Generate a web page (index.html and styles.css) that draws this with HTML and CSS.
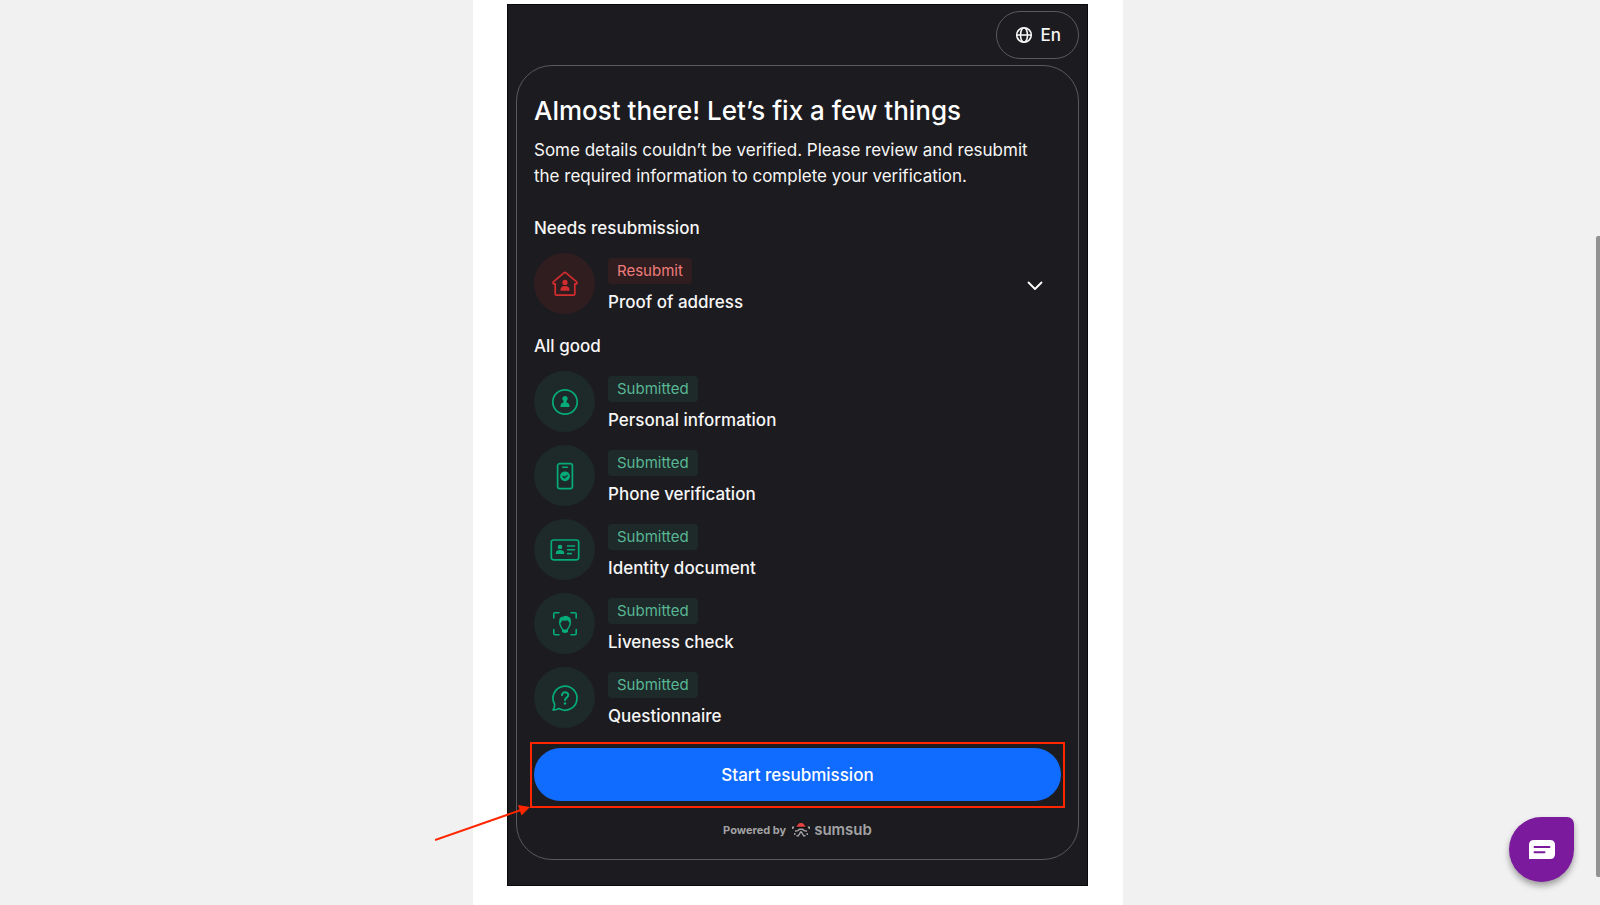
FILE: index.html
```html
<!DOCTYPE html>
<html lang="en">
<head>
<meta charset="utf-8">
<meta name="viewport" content="width=device-width, initial-scale=1">
<title>Verification</title>
<link rel="stylesheet" href="styles.css">
</head>
<body>
<main class="column">
  <div class="panel">
    <button class="lang" type="button">
      <svg width="18" height="18" viewBox="0 0 18 18" fill="none" stroke="currentColor" stroke-width="1.6" aria-hidden="true"><circle cx="9" cy="9" r="7.3"/><ellipse cx="9" cy="9" rx="3.5" ry="7.3"/><path d="M1.7 9h14.6"/></svg>
      <span>En</span>
    </button>
    <section class="card">
      <h1 class="title">Almost there! Let’s fix a few things</h1>
      <p class="intro">Some details couldn’t be verified. Please review and resubmit the required information to complete your verification.</p>

      <h2 class="group">Needs resubmission</h2>
      <ul class="steps">
        <li class="step step-bad">
          <span class="disc"><svg width="30" height="30" viewBox="0 0 30 30" aria-hidden="true"><path d="M5.2 25V14.8H3.6Q2.4 13.8 3.6 12.7L14 3.9q1-.8 2 0l10.400 8.800q1.200 1.100 0 2.100h-1.600V25q0 1.200-1.200 1.200H6.400Q5.200 26.200 5.200 25Z" fill="none" stroke="currentColor" stroke-width="1.7" stroke-linejoin="round"/><circle cx="15" cy="13.400" r="2.600" fill="currentColor"/><path d="M10.500 21.800v-1q0-3.800 4.500-3.800t4.500 3.800v1Z" fill="currentColor"/></svg></span>
          <div class="info"><span class="badge">Resubmit</span><span class="name">Proof of address</span></div>
          <button class="toggle" type="button" aria-label="Show details"><svg width="16" height="10" viewBox="0 0 16 10" fill="none" stroke="currentColor" stroke-width="1.800" stroke-linecap="round" stroke-linejoin="round"><path d="M1.500 1.500 8 8l6.500-6.500"/></svg></button>
        </li>
      </ul>

      <h2 class="group group-next">All good</h2>
      <ul class="steps">
        <li class="step">
          <span class="disc"><svg width="30" height="30" viewBox="0 0 30 30" aria-hidden="true"><circle cx="15" cy="15" r="12.200" fill="none" stroke="currentColor" stroke-width="1.700"/><circle cx="15" cy="11.500" r="2.600" fill="currentColor"/><path d="M10.500 20v-1q0-2.800 3-3.500v-1.500h3v1.500q3 .7 3 3.500v1Z" fill="currentColor"/></svg></span>
          <div class="info"><span class="badge">Submitted</span><span class="name">Personal information</span></div>
        </li>
        <li class="step">
          <span class="disc"><svg width="30" height="30" viewBox="0 0 30 30" aria-hidden="true"><rect x="7.600" y="2.600" width="14.800" height="25" rx="2.200" fill="none" stroke="currentColor" stroke-width="1.700"/><path d="M12.700 6.300h4.600" stroke="currentColor" stroke-width="1.500" stroke-linecap="round"/><circle cx="15" cy="15.300" r="4.900" fill="currentColor"/><path d="m12.600 15 1.900 1.800 3-2.600" fill="none" stroke="#1e2929" stroke-width="1.300"/></svg></span>
          <div class="info"><span class="badge">Submitted</span><span class="name">Phone verification</span></div>
        </li>
        <li class="step">
          <span class="disc"><svg width="30" height="30" viewBox="0 0 30 30" aria-hidden="true"><rect x="1.300" y="5" width="27.400" height="19.800" rx="2.200" fill="none" stroke="currentColor" stroke-width="1.700"/><circle cx="10" cy="12" r="2.300" fill="currentColor"/><path d="M5.800 19v-.8q0-3.200 4.200-3.200t4.200 3.200v.8Z" fill="currentColor"/><path d="M17.500 11h7M17.500 14.800h7M17.500 18.600h3.800" stroke="currentColor" stroke-width="1.600" stroke-linecap="round"/></svg></span>
          <div class="info"><span class="badge">Submitted</span><span class="name">Identity document</span></div>
        </li>
        <li class="step">
          <span class="disc"><svg width="30" height="30" viewBox="0 0 30 30" aria-hidden="true"><path d="M3.800 9V5q0-1.200 1.200-1.200h4M21 3.800h4q1.200 0 1.200 1.200v4M26.200 20.500v4q0 1.200-1.200 1.200h-4M9 25.700H5q-1.200 0-1.200-1.200v-4" fill="none" stroke="currentColor" stroke-width="1.600" stroke-linecap="round"/><path d="M10.200 12.500c-1.500 2 .2 4 1.300 6.300.8 1.700 1.500 3.200 3.500 3.200s2.700-1.500 3.500-3.200c1.100-2.300 2.800-4.300 1.300-6.300" fill="none" stroke="currentColor" stroke-width="1.400"/><path d="M9.300 13.500q-.8-5.800 4-6 2.700-1.500 4.700 0 3.600 1 2.700 6l-1.400.3-1.500-2.600q-3 1.200-5.300 0l-1.600 2.600ZM12 20.500h6v2.500q-3 1.800-6 0Z" fill="currentColor"/></svg></span>
          <div class="info"><span class="badge">Submitted</span><span class="name">Liveness check</span></div>
        </li>
        <li class="step">
          <span class="disc"><svg width="30" height="30" viewBox="0 0 30 30" fill="none" stroke="currentColor" stroke-width="1.700" stroke-linecap="round" stroke-linejoin="round" aria-hidden="true"><path d="M4.600 21.200A12 12 0 1 1 9 25.600C7.300 26.600 5.300 27.100 3 26.900 4.200 25.200 4.900 23.300 4.600 21.200Z"/><path d="M12 12.300c0-4 6.400-3.900 6.200 0-.1 2.200-3.200 2.500-3.200 4.900" stroke-width="2"/><path d="M15 20.500v.1" stroke-width="2.500"/></svg></span>
          <div class="info"><span class="badge">Submitted</span><span class="name">Questionnaire</span></div>
        </li>
      </ul>

      <div class="action">
        <button class="start" type="button">Start resubmission</button>
        <div class="marker">
          <svg class="arrow" width="97" height="38" viewBox="0 0 97 38" aria-hidden="true"><path d="M0 37 86 7" stroke="#ff2600" stroke-width="2"/><path d="M95 4 83 2l3.500 10.500Z" fill="#ff2600"/></svg>
        </div>
      </div>

      <footer class="powered">
        <span>Powered by</span>
        <span class="brand">
          <svg width="18" height="14" viewBox="0 0 18 14" aria-hidden="true"><path d="M4 3.700Q5 3 6 1.400 6.800 0 9 0t3 1.400Q13 3 14 3.700Z" fill="#e5433f"/><path d="M3 4.500h12" stroke="#0c0c0e"/><path d="M.7 6V4.200h1.400M17.300 6V4.200h-1.400M3 8.300q3.500-.3 4.300-2h3.400q.8 1.700 4.300 2M9 8.300 6.300 12.800H4.500M9 8.300l2.700 4.500h1.800M2.800 10v2M15.200 10v2" fill="none" stroke="#a2a2a4" stroke-width="1.400"/></svg>
          <span class="wordmark">sumsub</span>
        </span>
      </footer>
    </section>
  </div>
</main>

<button class="chat" type="button" aria-label="Open chat">
  <svg width="26" height="20" viewBox="0 0 26 20" aria-hidden="true"><path d="M5 0h16q5 0 5 5v9q0 5-5 5H0V5q0-5 5-5Z" fill="#fff"/><path d="M5.500 7h15M5.500 12.300h10" stroke="#7b1a9c" stroke-width="2" stroke-linecap="round"/></svg>
</button>
<div class="thumb"></div>
</body>
</html>
```

FILE: styles.css
```css
* { box-sizing: border-box; }

body {
  margin: 0;
  padding-right: 4px;
  background: #f1f1f1;
  color: #f6f6f6;
  font-family: Inter, "Open Sans", sans-serif;
  font-size: 17px;
  font-weight: 500;
  line-height: 24px;
}

button {
  border: 0;
  padding: 0;
  background: none;
  color: inherit;
  font: inherit;
  cursor: pointer;
}

svg { display: block; }

.column {
  max-width: 650px;
  min-height: 100vh;
  margin: 0 auto;
  padding: 4px 35px 19px 34px;
  background: #fff;
}

.panel {
  display: flex;
  flex-direction: column;
  gap: 6px;
  padding: 6px 8px 25px;
  border: 1px solid #09090b;
  background: #1c1b1f;
}

.lang {
  display: flex;
  align-items: center;
  align-self: flex-end;
  gap: 8px;
  height: 48px;
  padding: 0 17px 0 18px;
  border: 1px solid #5a595c;
  border-radius: 24px;
}

.card {
  padding: 28px 17px 21px;
  border: 1px solid #5a595c;
  border-radius: 36px;
}

.title {
  margin: 0 0 9px;
  font-size: 26px;
  font-weight: 500;
  line-height: 34px;
  color: #fff;
}

.intro {
  margin: 0 0 27px;
  padding-right: 20px;
  font-weight: 400;
  line-height: 26px;
}

.group {
  margin: 0 0 13px;
  font-size: 17px;
  font-weight: 500;
}

.group-next { margin-top: 20px; }

.steps {
  display: grid;
  gap: 13px;
  margin: 0;
  padding: 0;
  list-style: none;
}

.step {
  display: flex;
  align-items: center;
  gap: 13px;
  color: #05ab78;
}

.step-bad { color: #d32d2f; }

.disc {
  display: grid;
  place-items: center;
  flex: none;
  width: 61px;
  height: 61px;
  border-radius: 50%;
  background: #1e2929;
}

.info {
  display: flex;
  flex: 1;
  flex-direction: column;
  align-items: flex-start;
  align-self: flex-end;
  gap: 6px;
}

.badge {
  padding: 0 9px;
  border-radius: 4px;
  background: #1e2929;
  color: #58b794;
  font-size: 15px;
  font-weight: 400;
  line-height: 26px;
}

.step-bad .disc,
.step-bad .badge { background: #301d20; }
.step-bad .badge { color: #ee7c7c; }

.name { color: #f6f6f6; }

.toggle {
  padding: 12px 18px 8px;
  color: #fff;
}

.action {
  position: relative;
  margin: 20px 0 21px;
}

.start {
  width: 100%;
  height: 53px;
  border-radius: 27px;
  background: #106bff;
  color: #fff;
}

.marker {
  position: absolute;
  inset: -6px -4px -7px;
  border: 2px solid #ff2600;
  pointer-events: none;
}

.arrow {
  position: absolute;
  top: 100%;
  right: 100%;
  margin-top: -3px;
}

.powered {
  display: flex;
  align-items: center;
  justify-content: center;
  gap: 6px;
  color: #a2a2a4;
  font-size: 11px;
  font-weight: 700;
  line-height: 16px;
}

.brand {
  display: flex;
  align-items: center;
  gap: 4px;
}

.wordmark {
  font-size: 15px;
  font-weight: 600;
}

.chat {
  position: fixed;
  right: 26px;
  bottom: 23px;
  display: grid;
  place-items: center;
  width: 65px;
  height: 65px;
  border-radius: 33px 7px 33px 33px;
  background: #7b1a9c;
  box-shadow: 0 4px 6px rgb(0 0 0 / 35%);
}

.thumb {
  position: fixed;
  top: 236px;
  right: 0;
  bottom: 28px;
  width: 4px;
  border-radius: 2px 0 0 2px;
  background: #929292;
}
```
